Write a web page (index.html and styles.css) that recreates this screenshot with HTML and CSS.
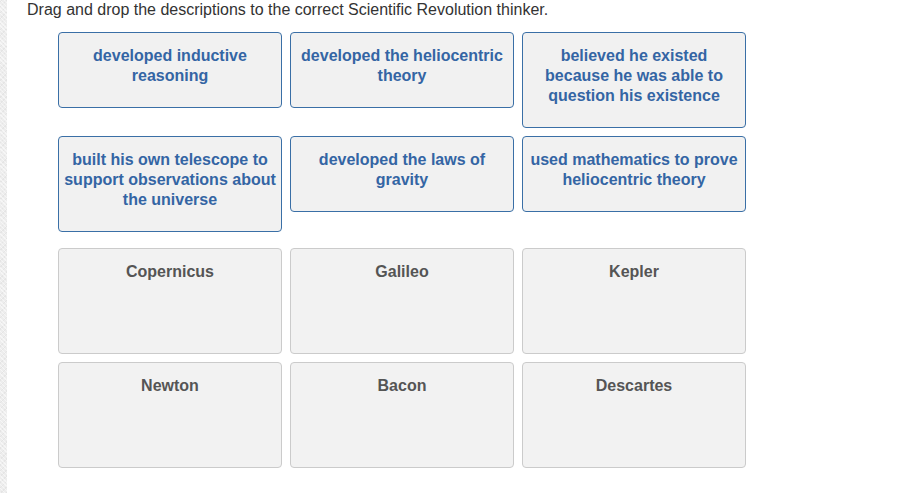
FILE: index.html
```html
<!DOCTYPE html>
<html>
<head>
<meta charset="utf-8">
<link rel="stylesheet" href="styles.css">
</head>
<body>
<div class="page">
  <div class="strip"></div>
  <main class="main">
    <p class="prompt">Drag and drop the descriptions to the correct Scientific Revolution thinker.</p>
    <div class="cards">
      <div class="card">developed inductive reasoning</div>
      <div class="card">developed the heliocentric theory</div>
      <div class="card">believed he existed because he was able to question his existence</div>
      <div class="card">built his own telescope to support observations about the universe</div>
      <div class="card">developed the laws of gravity</div>
      <div class="card">used mathematics to prove heliocentric theory</div>
    </div>
    <div class="zones">
      <div class="zone">Copernicus</div>
      <div class="zone">Galileo</div>
      <div class="zone">Kepler</div>
      <div class="zone">Newton</div>
      <div class="zone">Bacon</div>
      <div class="zone">Descartes</div>
    </div>
  </main>
</div>
</body>
</html>
```
FILE: styles.css
```css
html, body {
  margin: 0;
  padding: 0;
  background: #ffffff;
}
body {
  font-family: "Liberation Sans", Arial, sans-serif;
}
.page {
  display: flex;
  min-height: 493px;
}
.strip {
  width: 7px;
  flex: none;
  background-color: #ededed;
  background-image: repeating-linear-gradient(45deg, rgba(255,255,255,0.5) 0 1px, transparent 1px 3px),
                    repeating-linear-gradient(-45deg, rgba(220,220,220,0.5) 0 1px, transparent 1px 4px);
}
.main {
  flex: 1;
  padding-left: 20px;
}
.prompt {
  margin: 0;
  font-size: 16px;
  line-height: 20px;
  color: #333333;
}
.cards {
  display: grid;
  grid-template-columns: repeat(3, 224px);
  column-gap: 8px;
  row-gap: 8px;
  align-items: start;
  margin: 12px 0 0 31px;
}
.card {
  box-sizing: border-box;
  border: 1px solid #3a6fa6;
  border-radius: 4px;
  background: #f1f1f1;
  color: #3465a4;
  font-weight: bold;
  font-size: 16px;
  line-height: 20px;
  text-align: center;
  padding: 13px 4px 21px;
}
.zones {
  display: grid;
  grid-template-columns: repeat(3, 224px);
  column-gap: 8px;
  row-gap: 8px;
  margin: 16px 0 0 31px;
}
.zone {
  box-sizing: border-box;
  height: 106px;
  border: 1px solid #cbcbcb;
  border-radius: 4px;
  background: #f2f2f2;
  color: #555555;
  font-weight: bold;
  font-size: 16px;
  line-height: 20px;
  text-align: center;
  padding-top: 13px;
}
```
